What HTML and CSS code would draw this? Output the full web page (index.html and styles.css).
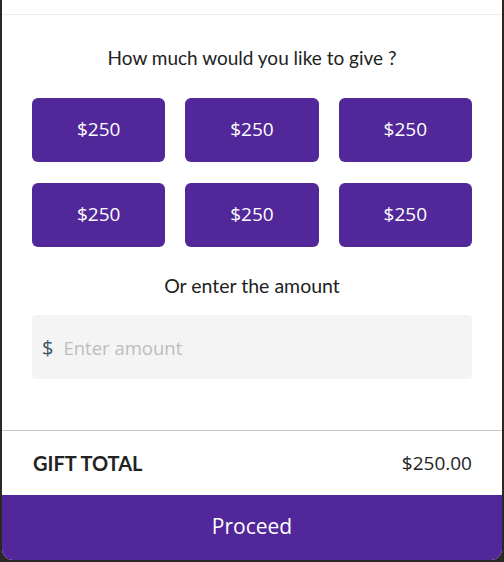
FILE: index.html
```html
<!DOCTYPE html>
<html lang="en">
<head>
<meta charset="utf-8">
<title>Gift</title>
<link rel="stylesheet" href="styles.css">
</head>
<body>
<div class="card">
  <div class="topbar"></div>
  <div class="content">
    <h2 class="title">How much would you like to give ?</h2>
    <div class="amounts">
      <button class="amount">$250</button>
      <button class="amount">$250</button>
      <button class="amount">$250</button>
      <button class="amount">$250</button>
      <button class="amount">$250</button>
      <button class="amount">$250</button>
    </div>
    <p class="subtitle">Or enter the amount</p>
    <label class="field">
      <span class="currency">$</span>
      <input class="input" type="text" placeholder="Enter amount">
    </label>
  </div>
  <div class="total">
    <span class="total-label">GIFT TOTAL</span>
    <span class="total-value">$250.00</span>
  </div>
  <button class="proceed">Proceed</button>
</div>
</body>
</html>
```
FILE: styles.css
```css
* { box-sizing: border-box; }
html, body { margin: 0; padding: 0; }
body {
  background: #2a2725;
  width: 504px;
  height: 562px;
  overflow: hidden;
}
.card {
  margin: 0 2px;
  width: 500px;
  height: 560px;
  background: #fff;
  border-radius: 0 0 11px 11px;
  overflow: hidden;
  display: flex;
  flex-direction: column;
}
.topbar {
  height: 15px;
  border-bottom: 1px solid #ebebeb;
  flex: none;
}
.content {
  padding: 0 30px;
  flex: 1;
}
.title {
  margin: 31px 0 0;
  font-family: Lato, "Liberation Sans", sans-serif;
  font-weight: 400;
  font-size: 19px;
  line-height: 24px;
  color: #222;
  text-align: center;
}
.amounts {
  margin-top: 28px;
  display: grid;
  grid-template-columns: repeat(3, 1fr);
  gap: 21px 20px;
}
.amount {
  height: 64px;
  border: none;
  border-radius: 6px;
  background: #51279a;
  color: #fff;
  font-family: "Open Sans", "Noto Sans", sans-serif;
  font-size: 19px;
  padding: 0 0 2px;
}
.subtitle {
  margin: 27px 0 0;
  font-family: Lato, "Liberation Sans", sans-serif;
  font-size: 19.5px;
  line-height: 24px;
  color: #222;
  text-align: center;
}
.field {
  margin-top: 17px;
  height: 64px;
  background: #f4f4f4;
  border-radius: 4px;
  display: flex;
  align-items: center;
  padding: 0 10px;
  gap: 10px;
}
.currency {
  font-family: "Open Sans", "Noto Sans", sans-serif;
  font-size: 20px;
  color: #3b5566;
}
.input {
  flex: 1;
  border: none;
  background: transparent;
  outline: none;
  font-family: "Open Sans", "Noto Sans", sans-serif;
  font-size: 18.5px;
  color: #333;
  padding: 0;
}
.input::placeholder { color: #bdbdbd; }
.total {
  flex: none;
  height: 65px;
  border-top: 1px solid #c8c8c8;
  display: flex;
  align-items: center;
  justify-content: space-between;
  padding: 0 30px 0 31px;
}
.total-label {
  font-family: Lato, "Liberation Sans", sans-serif;
  font-weight: 700;
  font-size: 20px;
  color: #222;
}
.total-value {
  font-family: "Open Sans", "Noto Sans", sans-serif;
  font-size: 19px;
  color: #222;
}
.proceed {
  flex: none;
  height: 65px;
  width: 100%;
  border: none;
  background: #51279a;
  color: #fff;
  font-family: "Open Sans", "Noto Sans", sans-serif;
  font-size: 21px;
  padding: 0 0 4px;
}
```
